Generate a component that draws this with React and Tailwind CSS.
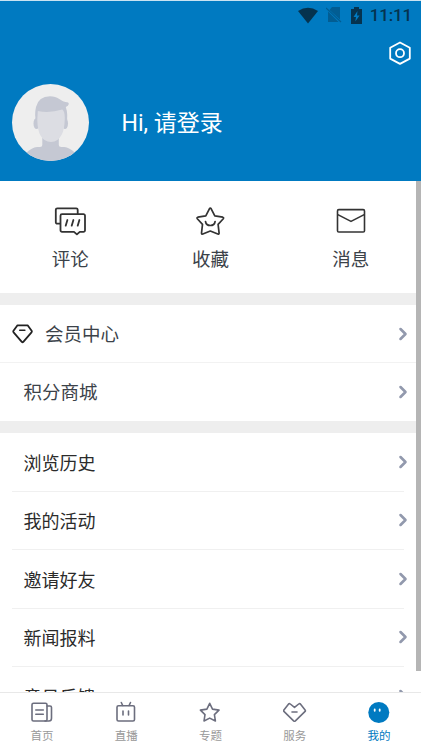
import { ChevronRight } from "lucide-react";

const stroke = {
  fill: "none",
  stroke: "currentColor",
  strokeLinecap: "round",
  strokeLinejoin: "round",
};

function CommentIcon() {
  return (
    <svg className="w-8 h-8" viewBox="0 0 32 32" strokeWidth={1.8} {...stroke}>
      <path d="M6 18.7H3.300a1.500 1.500 0 01-1.500-1.500V4.800a1.500 1.500 0 011.500-1.500h18.900a1.500 1.500 0 011.500 1.500v3.900" />
      <path d="M8 9.200h21.500a1.500 1.500 0 011.500 1.500v14.600a1.500 1.500 0 01-1.500 1.500h-3.700l-2.900 2.600-2.900-2.600H8a1.500 1.500 0 01-1.500-1.500V10.700A1.500 1.500 0 018 9.200z" />
      <path d="M13.400 15l-1.700 5.700M19.400 15l-1.700 5.700M25.400 15l-1.700 5.700" />
    </svg>
  );
}

function FavoriteIcon() {
  return (
    <svg className="w-8 h-8" viewBox="0 0 32 32" strokeWidth={1.7} {...stroke}>
      <path d="M15.400 3.800q.9-1.300 1.800 0l3.600 7.100 8 1.300q1.300.4.500 1.500l-5.200 5.700 1 8.700q0 1.300-1.300.9l-7.500-3-7.500 3q-1.300.4-1.300-.9l1-8.700-5.200-5.700q-.8-1.100.5-1.500l8-1.300z" />
      <path d="M11.500 16.500c.8 5.300 8.800 5.300 9.600 0" />
    </svg>
  );
}

function MessageIcon() {
  return (
    <svg className="w-8 h-8" viewBox="0 0 32 32" strokeWidth={1.6} {...stroke}>
      <rect x="2.500" y="4.600" width="27" height="22.400" rx="1.300" />
      <path d="M2.800 9.600L16 16.400l13.200-6.800" />
    </svg>
  );
}

function DiamondIcon() {
  return (
    <svg className="w-[21px] h-5" viewBox="0 0 21 20" strokeWidth={1.8} {...stroke}>
      <path d="M5.500 1.300h10.100l4 5.500c.4.600.3 1-.1 1.500l-8.200 9.500c-.5.500-1 .5-1.500 0L1.600 8.300c-.4-.5-.5-.9-.1-1.500z" />
      <path d="M7.700 6.300h5.200" strokeWidth={1.500} />
    </svg>
  );
}

function Avatar() {
  return (
    <svg className="w-[77px] h-[77px] rounded-full bg-[#eeeeee]" viewBox="0 0 77 77">
      <path
        d="M30.300 54h16.500v7q0 2 2.500 2h3q5 .5 11 6l0 9H14v-9q6-5.500 11-6h3q2.300 0 2.300-2z"
        fill="#c5c8d3"
      />
      <ellipse cx="24.500" cy="39.500" rx="3" ry="5.500" fill="#c5c8d3" />
      <ellipse cx="53" cy="39.500" rx="3" ry="5.500" fill="#c5c8d3" />
      <path
        d="M24.500 40q-2.500-9-.500-17 2.500-10.500 14-10.700c8 0 10.500 5 15.500 5.700q3.500 0 3.300 2-.300 2-3 3 2.500 7 .700 17z"
        fill="#c5c8d3"
      />
      <path
        d="M25.800 27q11.700 2.500 24.500-1.500 2.500 1.500 2.500 9-.3 11-3 16Q46 58 39 58t-10.500-6.500q-3-5-3.200-16z"
        fill="#dcdde3"
      />
    </svg>
  );
}

function StatusBar() {
  return (
    <div className="flex items-center justify-end h-7 pr-[9px] text-[#05334f]">
      <svg className="w-5 h-[17px]" viewBox="0 0 20 17" fill="currentColor">
        <path d="M0 4Q10-2.500 20 4L10 16.500z" />
      </svg>
      <svg className="w-4 h-4 ml-2 opacity-40" viewBox="0 0 16 16">
        <path d="M6 0h8v12.500L3.500 3zM2 4.500L12.500 15H2z" fill="currentColor" />
        <path d="M0 1l15 14" stroke="currentColor" strokeWidth="1.200" />
      </svg>
      <svg className="w-[11px] h-[17px] ml-[9px]" viewBox="0 0 11 17">
        <path d="M3 0h5v2h3v15H0V2h3z" fill="currentColor" />
        <path d="M6.500 4L2.500 10h2.500l-.700 4.500 4.300-6H6z" fill="#007ac1" />
      </svg>
      <span className="ml-2 text-[17px] leading-none tracking-[-0.2px] font-medium font-[Roboto,sans-serif]">
        11:11
      </span>
    </div>
  );
}

const shortcuts = [
  { label: "评论", icon: CommentIcon },
  { label: "收藏", icon: FavoriteIcon },
  { label: "消息", icon: MessageIcon },
];

const menu = ["浏览历史", "我的活动", "邀请好友", "新闻报料", "意见反馈"];

const tabs = [
  {
    label: "首页",
    icon: (
      <>
        <rect x="2" y="2.300" width="15" height="17.700" rx="1.500" />
        <path d="M17 5h3a1.500 1.500 0 011.500 1.500v10.800q0 2.700-2.500 2.700h-4M5.800 9h7.500M5.800 13.200h7.500" />
      </>
    ),
  },
  {
    label: "直播",
    icon: (
      <>
        <rect x="3" y="4.700" width="17.500" height="15.300" rx="1.500" />
        <path d="M7.300 1.500l1.400 3M16.500 1.500l-1.400 3M9 10v4M14.500 10v4" />
      </>
    ),
  },
  {
    label: "专题",
    icon: (
      <path d="M11.700 2.300l2.800 5.800 6.500 1-4.600 4.500 1 6.400-5.700-2.900L6 20l1-6.400-4.600-4.500 6.500-1z" />
    ),
  },
  {
    label: "服务",
    icon: (
      <>
        <path d="M5.600 3q.9-.7 1.700 0l4.200 3.400 4.200-3.400q.8-.7 1.700 0l4.700 5.900q.6.800 0 1.500l-9.700 9.500q-.9.700-1.800 0L.9 10.400q-.6-.7 0-1.500z" />
        <path d="M9 11h5" />
      </>
    ),
  },
  {
    label: "我的",
    active: true,
    icon: (
      <>
        <circle cx="11.800" cy="11.500" r="10.500" fill="#007ac1" stroke="none" />
        <path d="M7.700 8.400v1.400M12.700 8.400v1.400" stroke="white" strokeWidth={1.800} />
      </>
    ),
  },
];

function Chevron() {
  return <ChevronRight className="w-5 h-5 ml-auto text-[#9299ad]" strokeWidth={3.100} />;
}

export default function App() {
  return (
    <div className="relative flex flex-col w-[421px] h-[750px] overflow-hidden bg-white text-[#3b4249] font-['Noto_Sans_CJK_SC',sans-serif]">
      <header className="h-[181px] shrink-0 bg-[#007ac1] border-t border-[#c9e3f2]">
        <StatusBar />
        <div className="flex justify-end h-[55px] pt-3 pr-[9px] text-white">
          <svg className="w-6 h-6" viewBox="0 0 24 24" strokeWidth={1.800} {...stroke}>
            <path d="M12 1.500l9.800 5.300v10.800L12 22.900l-9.800-5.300V6.800z" />
            <circle cx="12" cy="12.200" r="4" />
          </svg>
        </div>
        <div className="flex items-center ml-[11.5px] text-white">
          <Avatar />
          <span className="ml-[33px] pt-[3px] text-[23px] leading-8 font-[Roboto,'Noto_Sans_CJK_SC',sans-serif]">
            Hi, 请登录
          </span>
        </div>
      </header>

      <main className="flex-1 min-h-0 overflow-hidden">
        <section className="grid grid-cols-3 h-28">
          {shortcuts.map(({ label, icon: Icon }) => (
            <div key={label} className="flex flex-col items-center pt-6 text-[#333]">
              <Icon />
              <span className="mt-[7px] text-[18.5px] leading-7 text-[#3b4249]">{label}</span>
            </div>
          ))}
        </section>

        <section className="border-y-12 border-[#eeeeee] text-[18.5px]">
          <div className="flex items-center h-[58px] pl-3 pr-2 border-b border-[#f2f2f2]">
            <span className="text-[#222]">
              <DiamondIcon />
            </span>
            <span className="ml-3">会员中心</span>
            <Chevron />
          </div>
          <div className="flex items-center h-[58px] pl-[23.5px] pr-2">
            <span>积分商城</span>
            <Chevron />
          </div>
        </section>

        <ul className="pl-3 pr-[17px] text-lg text-[#2b2b2b]">
          {menu.map((item) => (
            <li key={item} className="flex items-center h-[58.5px] pl-[11.5px] border-b border-[#f0f0f0]">
              <span>{item}</span>
              <div className="ml-auto -mr-[9px]">
                <Chevron />
              </div>
            </li>
          ))}
        </ul>
      </main>

      <nav className="grid grid-cols-5 h-[58px] shrink-0 bg-white border-t border-[#e8e8e8]">
        {tabs.map((tab) => (
          <div
            key={tab.label}
            className={`flex flex-col items-center pt-2 ${tab.active ? "text-[#007ac1]" : "text-[#999]"}`}
          >
            <svg
              className="w-6 h-6 text-[#6c6e7e]"
              viewBox="0 0 24 24"
              strokeWidth={1.600}
              {...stroke}
            >
              {tab.icon}
            </svg>
            <span className="mt-0.5 text-[11.5px] leading-4">{tab.label}</span>
          </div>
        ))}
      </nav>

      {/* scrollbar thumb */}
      <div className="absolute right-0 top-[181px] w-[5px] h-[490px] bg-[#b5b5b5]" />
    </div>
  );
}
